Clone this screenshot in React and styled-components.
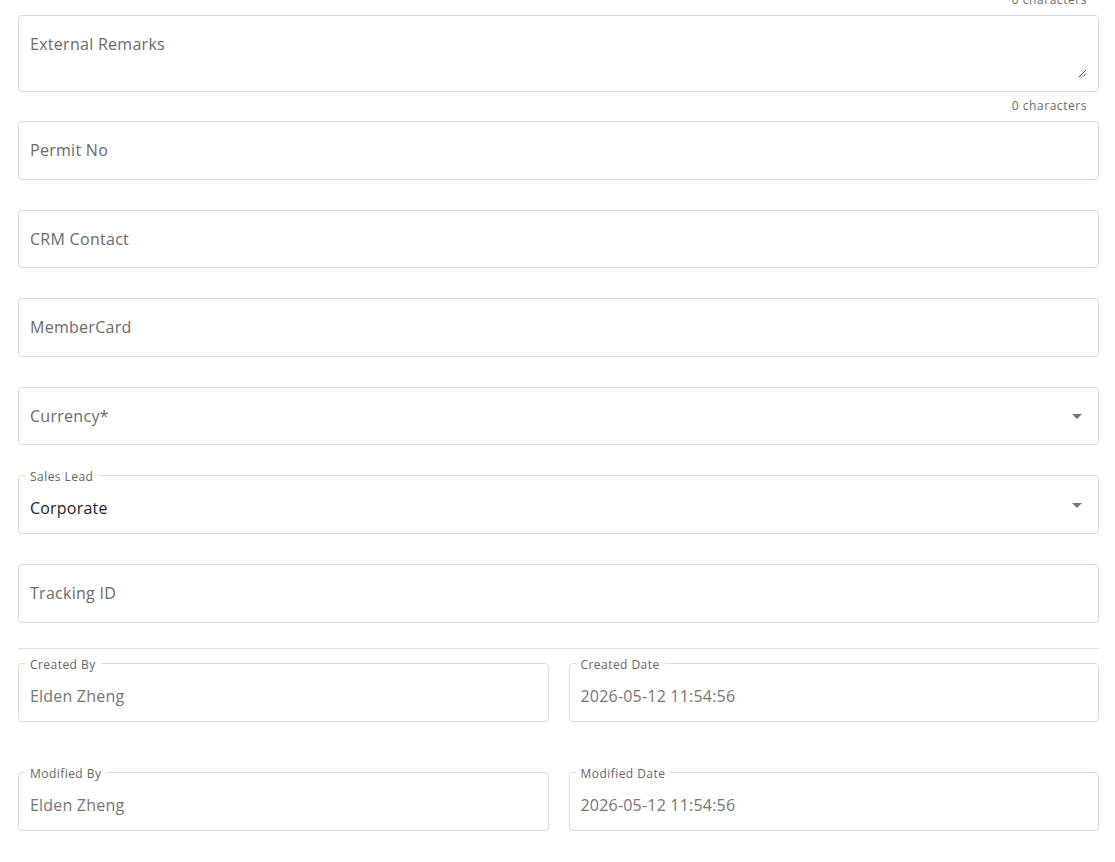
import React from 'react';
import styled, { createGlobalStyle } from 'styled-components';

const GlobalStyle = createGlobalStyle`
  html, body {
    margin: 0;
    padding: 0;
    background: #fff;
    overflow: hidden;
  }
  body {
    font-family: 'Open Sans', 'Liberation Sans', sans-serif;
    color: rgba(0, 0, 0, 0.87);
  }
`;

const Page = styled.div`
  display: flex;
  flex-direction: column;
  margin: -14px 16px 0 18px;
`;

const Helper = styled.div`
  height: 29px;
  padding-top: 4px;
  box-sizing: border-box;
  text-align: right;
  padding-right: 12px;
  font-size: 12px;
  line-height: 20px;
  letter-spacing: 0.55px;
  color: #6b6b6b;
`;

const Box = styled.div`
  position: relative;
  box-sizing: border-box;
  height: ${(p) => p.$height || 58.6}px;
  border: 1px solid #dcdcdc;
  border-radius: 4px;
  display: flex;
  align-items: ${(p) => (p.$top ? 'flex-start' : 'center')};
  padding: ${(p) => (p.$top ? '17px 11px 0' : '0 11px')};
  margin-bottom: ${(p) => p.$gap ?? 30}px;
`;

const Placeholder = styled.span`
  font-size: 16px;
  letter-spacing: 0.28px;
  color: #6b6b6b;
`;

const Value = styled.span`
  font-size: 16px;
  letter-spacing: 0.2px;
  padding-top: 7px;
  color: ${(p) => (p.$muted ? '#767676' : '#1f1f1f')};
`;

const FloatLabel = styled.span`
  position: absolute;
  top: -6px;
  left: 6px;
  padding: 0 5px;
  background: #fff;
  font-size: 12px;
  line-height: 14px;
  letter-spacing: 0.45px;
  color: #666;
`;

const Arrow = styled.svg`
  position: absolute;
  right: 9px;
  top: 50%;
  margin-top: -12px;
  width: 24px;
  height: 24px;
  fill: #757575;
`;

const Grip = styled.svg`
  position: absolute;
  right: 11px;
  bottom: 13px;
  width: 9px;
  height: 9px;
`;

const Divider = styled.hr`
  border: 0;
  border-top: 1px solid #e0e0e0;
  margin: -5px 0 14.5px;
`;

const Row = styled.div`
  display: grid;
  grid-template-columns: 1fr 1fr;
  column-gap: 20px;
`;

function DropArrow() {
  return (
    <Arrow viewBox="0 0 24 24">
      <path d="M7 10l5 5 5-5z" />
    </Arrow>
  );
}

function Field({ label, value, select, muted, gap }) {
  if (value === undefined) {
    return (
      <Box $gap={gap}>
        <Placeholder>{label}</Placeholder>
        {select && <DropArrow />}
      </Box>
    );
  }
  return (
    <Box $gap={gap}>
      <FloatLabel>{label}</FloatLabel>
      <Value $muted={muted}>{value}</Value>
      {select && <DropArrow />}
    </Box>
  );
}

export default function App() {
  return (
    <>
      <GlobalStyle />
      <Page>
        <Helper>0 characters</Helper>
        <Box $height={77} $top $gap={0}>
          <Placeholder>External Remarks</Placeholder>
          <Grip viewBox="0 0 9 9">
            <path d="M1 8L8 1M4.5 8L8 4.5" stroke="#555" strokeWidth="1" />
          </Grip>
        </Box>
        <Helper>0 characters</Helper>
        <Field label="Permit No" />
        <Field label="CRM Contact" />
        <Field label="MemberCard" />
        <Field label="Currency*" select />
        <Field label="Sales Lead" value="Corporate" select />
        <Field label="Tracking ID" />
        <Divider />
        <Row>
          <Field label="Created By" value="Elden Zheng" muted gap={50.4} />
          <Field label="Created Date" value="2026-05-12 11:54:56" muted gap={50.4} />
        </Row>
        <Row>
          <Field label="Modified By" value="Elden Zheng" muted />
          <Field label="Modified Date" value="2026-05-12 11:54:56" muted />
        </Row>
      </Page>
    </>
  );
}
